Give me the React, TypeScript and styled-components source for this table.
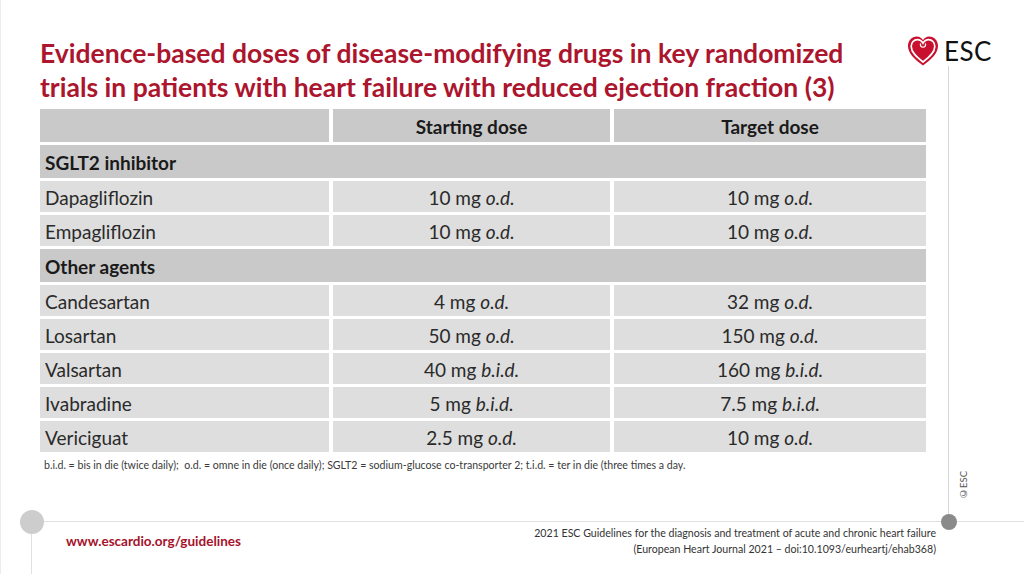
import React from "react";
import styled, { createGlobalStyle } from "styled-components";

const Global = createGlobalStyle`
  html, body { margin: 0; padding: 0; background: #ffffff; }
  body { font-family: Lato, "Open Sans", sans-serif; }
`;

const Slide = styled.div`
  width: 1024px;
  height: 574px;
  display: flex;
  flex-direction: column;
  background: #fff;
  border-left: 1px solid #ececec;
  box-sizing: border-box;
  overflow: hidden;
`;

const Upper = styled.div`
  display: flex;
  height: 521px;
`;

const Main = styled.div`
  width: 947px;
  padding: 36px 0 0 39px;
  box-sizing: border-box;
  display: flex;
  flex-direction: column;
`;

const Title = styled.h1`
  margin: 0;
  font-family: Lato, "Open Sans", sans-serif;
  font-weight: 700;
  font-size: 26.5px;
  line-height: 34px;
  color: #ab152d;
  white-space: nowrap;
`;

const Table = styled.div`
  margin-top: 5px;
  width: 886px;
  display: grid;
  grid-template-columns: 289px 277px 312px;
  column-gap: 4px;
  row-gap: 3px;
`;

type CellKind = "head" | "section" | "data";

const Cell = styled.div<{ $kind: CellKind; $center?: boolean; $span?: boolean }>`
  grid-column: ${(p) => (p.$span ? "1 / -1" : "auto")};
  height: ${(p) => (p.$kind === "data" ? 31 : 33)}px;
  background: ${(p) => (p.$kind === "data" ? "#dedede" : "#c9c9c9")};
  display: flex;
  align-items: center;
  justify-content: ${(p) => (p.$center ? "center" : "flex-start")};
  padding: 1px 5px 0;
  box-sizing: border-box;
  font-family: Lato, "Open Sans", sans-serif;
  font-size: 19px;
  font-weight: ${(p) => (p.$kind === "data" ? 400 : 700)};
  color: ${(p) => (p.$kind === "data" ? "#2a2a2a" : "#1a1a1a")};
  white-space: nowrap;
`;

const Em = styled.i`
  font-style: italic;
  margin-left: 5px;
`;

const Footnote = styled.p`
  margin: 7px 0 0 4px;
  font-family: Lato, "Open Sans", sans-serif;
  font-size: 10.6px;
  color: #3a3a3a;
  white-space: pre;
`;

const Rail = styled.div`
  flex: 1;
  display: flex;
  flex-direction: column;
`;

const Logo = styled.div`
  margin: 35px 0 0 -41px;
  height: 31px;
  display: flex;
  align-items: center;
  gap: 5px;
`;

const LogoText = styled.span`
  font-family: Lato, "Open Sans", sans-serif;
  font-size: 26px;
  font-weight: 400;
  color: #111;
  line-height: 1;
  letter-spacing: 0.5px;
`;

const RailLine = styled.div`
  flex: 1;
  border-left: 1px solid #d6d6d6;
  display: flex;
  align-items: flex-end;
  padding: 0 0 22px 9px;
`;

const Copyright = styled.span`
  display: inline-block;
  writing-mode: vertical-rl;
  transform: rotate(180deg);
  font-family: Lato, "Open Sans", sans-serif;
  font-size: 9.5px;
  color: #555;
`;

const Footer = styled.div`
  flex: 1;
  display: flex;
  padding-left: 30px;
`;

const FooterFrame = styled.div`
  position: relative;
  flex: 1;
  border-top: 1px solid #e0e0e0;
  border-left: 1px solid #e0e0e0;
  display: flex;
  justify-content: space-between;
  padding: 3px 88px 0 34px;
`;

const Dot = styled.span<{ $size: number; $color: string; $left: number }>`
  position: absolute;
  top: ${(p) => -p.$size / 2 - 0.5}px;
  left: ${(p) => p.$left - p.$size / 2}px;
  width: ${(p) => p.$size}px;
  height: ${(p) => p.$size}px;
  border-radius: 50%;
  background: ${(p) => p.$color};
`;

const Url = styled.span`
  margin-top: 8px;
  font-family: Lato, "Open Sans", sans-serif;
  font-weight: 700;
  font-size: 13.5px;
  color: #a5122b;
`;

const Citation = styled.div`
  text-align: right;
  font-family: Lato, "Open Sans", sans-serif;
  font-size: 10.6px;
  line-height: 16px;
  color: #333;
`;

const Heart = () => (
  <svg width="32" height="32" viewBox="0 0 32 32" aria-hidden="true">
    <path
      d="M16 30.5 C 7 24, 1 18, 1 11 C 1 5.5, 5 1.5, 9.8 1.5 C 12.8 1.5, 15 3.3, 16 5.2 C 17 3.3, 19.2 1.5, 22.2 1.5 C 27 1.5, 31 5.5, 31 11 C 31 18, 25 24, 16 30.5 Z"
      fill="#c8102e"
    />
    <path
      d="M16 27 C 9 21.5, 4.2 17, 4.2 11.4 C 4.2 7.4, 7 4.6, 10.3 4.6 C 12.8 4.6, 14.8 6.1, 16 8.2 C 17.2 6.1, 19.2 4.6, 21.7 4.6 C 25 4.6, 27.8 7.4, 27.8 11.4 C 27.8 17, 23 21.5, 16 27 Z"
      fill="#c8102e"
      stroke="#ffffff"
      strokeWidth="1.7"
    />
    <path d="M13.6 8.6 A 2.6 2.6 0 1 0 18.4 8.6" fill="none" stroke="#ffffff" strokeWidth="1.3" />
  </svg>
);

type Row =
  | { kind: "section"; label: string }
  | { kind: "data"; name: string; start: [string, string]; target: [string, string] };

const rows: Row[] = [
  { kind: "section", label: "SGLT2 inhibitor" },
  { kind: "data", name: "Dapagliflozin", start: ["10 mg", "o.d."], target: ["10 mg", "o.d."] },
  { kind: "data", name: "Empagliflozin", start: ["10 mg", "o.d."], target: ["10 mg", "o.d."] },
  { kind: "section", label: "Other agents" },
  { kind: "data", name: "Candesartan", start: ["4 mg", "o.d."], target: ["32 mg", "o.d."] },
  { kind: "data", name: "Losartan", start: ["50 mg", "o.d."], target: ["150 mg", "o.d."] },
  { kind: "data", name: "Valsartan", start: ["40 mg", "b.i.d."], target: ["160 mg", "b.i.d."] },
  { kind: "data", name: "Ivabradine", start: ["5 mg", "b.i.d."], target: ["7.5 mg", "b.i.d."] },
  { kind: "data", name: "Vericiguat", start: ["2.5 mg", "o.d."], target: ["10 mg", "o.d."] },
];

const Dose = ({ v }: { v: [string, string] }) => (
  <>
    {v[0]}
    <Em>{v[1]}</Em>
  </>
);

export default function App() {
  return (
    <>
      <Global />
      <Slide>
        <Upper>
          <Main>
            <Title>
              Evidence-based doses of disease-modifying drugs in key randomized
              <br />
              trials in patients with heart failure with reduced ejection fraction (3)
            </Title>
            <Table>
              <Cell $kind="head" />
              <Cell $kind="head" $center>Starting dose</Cell>
              <Cell $kind="head" $center>Target dose</Cell>
              {rows.map((r, i) =>
                r.kind === "section" ? (
                  <Cell key={i} $kind="section" $span>
                    {r.label}
                  </Cell>
                ) : (
                  <React.Fragment key={i}>
                    <Cell $kind="data">{r.name}</Cell>
                    <Cell $kind="data" $center>
                      <Dose v={r.start} />
                    </Cell>
                    <Cell $kind="data" $center>
                      <Dose v={r.target} />
                    </Cell>
                  </React.Fragment>
                )
              )}
            </Table>
            <Footnote>
              {"b.i.d. = bis in die (twice daily);  o.d. = omne in die (once daily); SGLT2 = sodium-glucose co-transporter 2; t.i.d. = ter in die (three times a day."}
            </Footnote>
          </Main>
          <Rail>
            <Logo>
              <Heart />
              <LogoText>ESC</LogoText>
            </Logo>
            <RailLine>
              <Copyright>©ESC</Copyright>
            </RailLine>
          </Rail>
        </Upper>
        <Footer>
          <FooterFrame>
            <Dot $size={24} $color="#cdcdcd" $left={0} />
            <Dot $size={16} $color="#8a8a8a" $left={917} />
            <Url>www.escardio.org/guidelines</Url>
            <Citation>
              2021 ESC Guidelines for the diagnosis and treatment of acute and chronic heart failure
              <br />
              (European Heart Journal 2021 – doi:10.1093/eurheartj/ehab368)
            </Citation>
          </FooterFrame>
        </Footer>
      </Slide>
    </>
  );
}
